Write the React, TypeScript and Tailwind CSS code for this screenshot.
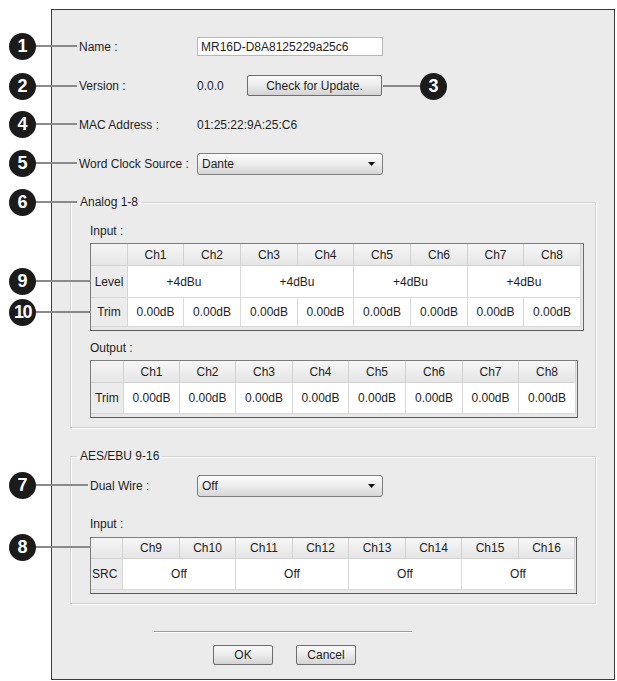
import React from "react";

type Cell = { text: string; span?: number };
type Row = { label: string; height: number; cells: Cell[]; labelAlign?: "center" | "left" };

function DataTable({
  width,
  headWidth,
  cols,
  labels,
  headerHeight,
  rows,
  tail,
}: {
  width: number;
  headWidth: number;
  cols: number[];
  labels: string[];
  headerHeight: number;
  rows: Row[];
  tail: number;
}) {
  return (
    <div
      className="border border-[#7c7c7c] bg-[#e8e8e8] border-b-[#5a5a5a] border-r-[#6a6a6a]"
      style={{ width }}
    >
      <div className="flex" style={{ height: headerHeight }}>
        <div
          className="shrink-0 border-r border-b border-[#d2d2d2] bg-linear-to-b from-[#f5f5f5] to-[#e6e6e6]"
          style={{ width: headWidth }}
        />
        {cols.map((w, i) => (
          <div
            key={i}
            className="shrink-0 flex items-center justify-center border-r border-b border-[#d2d2d2] bg-linear-to-b from-[#f7f7f7] to-[#e5e5e5]"
            style={{ width: w }}
          >
            {labels[i]}
          </div>
        ))}
      </div>
      {rows.map((r, ri) => {
        let c = 0;
        return (
          <div key={ri} className="flex" style={{ height: r.height }}>
            <div
              className={
                "shrink-0 flex items-center border-r border-b border-[#d6d6d6] bg-[#ececec] " +
                (r.labelAlign === "left" ? "justify-start pl-[1px]" : "justify-center")
              }
              style={{ width: headWidth }}
            >
              {r.label}
            </div>
            {r.cells.map((cell, ci) => {
              const span = cell.span ?? 1;
              const w = cols.slice(c, c + span).reduce((a, b) => a + b, 0);
              c += span;
              return (
                <div
                  key={ci}
                  className="shrink-0 flex items-center justify-center bg-white border-r border-b border-[#dadada]"
                  style={{ width: w }}
                >
                  {cell.text}
                </div>
              );
            })}
          </div>
        );
      })}
      <div style={{ height: tail }} />
    </div>
  );
}

function Dropdown({ value }: { value: string }) {
  return (
    <div className="w-[186px] h-[22px] flex items-center justify-between pl-[4px] pr-[7px] rounded-[3px] border border-[#7e7e7e] bg-linear-to-b from-[#fdfdfd] via-[#ececec] to-[#d6d6d6]">
      <span>{value}</span>
      <svg width="7" height="4" viewBox="0 0 7 4">
        <path d="M0 0 H7 L3.5 4 Z" fill="#111" />
      </svg>
    </div>
  );
}

function PushButton({ label, width, height }: { label: string; width: number; height: number }) {
  return (
    <div
      className="flex items-center justify-center rounded-[2px] border border-[#6e6e6e] bg-linear-to-b from-[#fafafa] via-[#ebebeb] to-[#d3d3d3]"
      style={{ width, height }}
    >
      {label}
    </div>
  );
}

function Group({ title, className, children }: { title: string; className?: string; children: React.ReactNode }) {
  return (
    <fieldset
      className={
        "ml-[18px] w-[526px] pl-[6px] border border-[#d3d3d3] shadow-[inset_1px_1px_0_#fbfbfb,1px_1px_0_#fbfbfb] " +
        (className ?? "")
      }
    >
      <legend className="px-[3px] leading-[14px]">{title}</legend>
      <div className="pl-[13px]">{children}</div>
    </fieldset>
  );
}

const chA = ["Ch1", "Ch2", "Ch3", "Ch4", "Ch5", "Ch6", "Ch7", "Ch8"];
const chB = ["Ch9", "Ch10", "Ch11", "Ch12", "Ch13", "Ch14", "Ch15", "Ch16"];
const trims: Cell[] = chA.map(() => ({ text: "0.00dB" }));

// numbered markers drawn over the dialog, with their leader lines
const markers = [
  { n: "1", x: 22, y: 46, to: 77 },
  { n: "2", x: 22, y: 86, to: 77 },
  { n: "4", x: 22, y: 124, to: 77 },
  { n: "5", x: 22, y: 163, to: 77 },
  { n: "6", x: 22, y: 202, to: 77 },
  { n: "9", x: 22, y: 281, to: 91 },
  { n: "10", x: 22, y: 312, to: 91 },
  { n: "7", x: 22, y: 485, to: 88 },
  { n: "8", x: 22, y: 547, to: 91 },
];

export default function App() {
  return (
    <div
      className="relative w-[617px] h-[681px] bg-white overflow-hidden pt-[9px] pl-[51px] text-[12px] text-[#1e1e1e]"
      style={{ fontFamily: '"Liberation Sans", Arial, sans-serif' }}
    >
      <div className="w-[564px] h-[671px] border border-[#3c3c3c] bg-[#ebebeb] flex flex-col">
        <div className="pt-[17px] pl-[27px]">
          <div className="flex items-center h-[39px]">
            <span className="w-[118px]">Name :</span>
            <div className="w-[186px] h-[19px] flex items-center bg-white border border-[#b8b8b8] pl-[3px]">
              MR16D-D8A8125229a25c6
            </div>
          </div>
          <div className="flex items-center h-[39px]">
            <span className="w-[118px]">Version :</span>
            <span className="w-[50px]">0.0.0</span>
            <PushButton label="Check for Update." width={135} height={21} />
          </div>
          <div className="flex items-center h-[39px]">
            <span className="w-[118px]">MAC Address :</span>
            <span>01:25:22:9A:25:C6</span>
          </div>
          <div className="flex items-center h-[39px]">
            <span className="w-[118px]">Word Clock Source :</span>
            <Dropdown value="Dante" />
          </div>
        </div>

        <Group title="Analog 1-8" className="mt-[12px] pb-[9px]">
          <div className="mt-[15px] leading-[14px]">Input :</div>
          <div className="mt-[5px]">
            <DataTable
              width={494}
              headWidth={37}
              cols={[56, 57, 57, 56, 57, 57, 56, 57]}
              labels={chA}
              headerHeight={22}
              tail={3}
              rows={[
                {
                  label: "Level",
                  height: 32,
                  cells: [
                    { text: "+4dBu", span: 2 },
                    { text: "+4dBu", span: 2 },
                    { text: "+4dBu", span: 2 },
                    { text: "+4dBu", span: 2 },
                  ],
                },
                { label: "Trim", height: 29, cells: trims },
              ]}
            />
          </div>
          <div className="mt-[10px] leading-[14px]">Output :</div>
          <div className="mt-[5px]">
            <DataTable
              width={488}
              headWidth={33}
              cols={[56, 56, 57, 56, 57, 57, 56, 57]}
              labels={chA}
              headerHeight={22}
              tail={3}
              rows={[{ label: "Trim", height: 31, cells: trims }]}
            />
          </div>
        </Group>

        <Group title="AES/EBU 9-16" className="mt-[21px] pb-[9px]">
          <div className="mt-[12px] flex items-center h-[22px]">
            <span className="w-[107px]">Dual Wire :</span>
            <Dropdown value="Off" />
          </div>
          <div className="mt-[20px] leading-[14px]">Input :</div>
          <div className="mt-[6px]">
            <DataTable
              width={487}
              headWidth={32}
              cols={[57, 56, 57, 56, 57, 56, 57, 56]}
              labels={chB}
              headerHeight={21}
              tail={3}
              rows={[
                {
                  label: "SRC",
                  height: 31,
                  labelAlign: "left",
                  cells: [
                    { text: "Off", span: 2 },
                    { text: "Off", span: 2 },
                    { text: "Off", span: 2 },
                    { text: "Off", span: 2 },
                  ],
                },
              ]}
            />
          </div>
        </Group>

        <div className="mt-[27px] ml-[102px] w-[258px] h-px bg-[#9c9c9c] shadow-[0_1px_0_#fafafa]" />
        <div className="mt-[13px] ml-[161px] flex gap-[23px]">
          <PushButton label="OK" width={60} height={20} />
          <PushButton label="Cancel" width={60} height={20} />
        </div>
      </div>

      {/* leader from the update button to marker 3 */}
      <div className="absolute left-[383px] top-[85px] w-[40px] h-[2px] bg-[#8a8a8a]" />
      <div className="absolute left-[420px] top-[73px] w-[27px] h-[27px] rounded-full bg-[#1b1b1b] text-white text-[18px] font-bold flex items-center justify-center">
        3
      </div>

      {markers.map((m) => (
        <React.Fragment key={m.n}>
          <div
            className="absolute h-[2px] bg-[#8a8a8a]"
            style={{ left: m.x + 10, top: m.y - 1, width: m.to - m.x - 10 }}
          />
          <div
            className="absolute w-[27px] h-[27px] rounded-full bg-[#1b1b1b] text-white text-[18px] font-bold flex items-center justify-center"
            style={{ left: m.x - 13, top: m.y - 13, letterSpacing: m.n.length > 1 ? "-1.5px" : undefined }}
          >
            {m.n}
          </div>
        </React.Fragment>
      ))}
    </div>
  );
}
